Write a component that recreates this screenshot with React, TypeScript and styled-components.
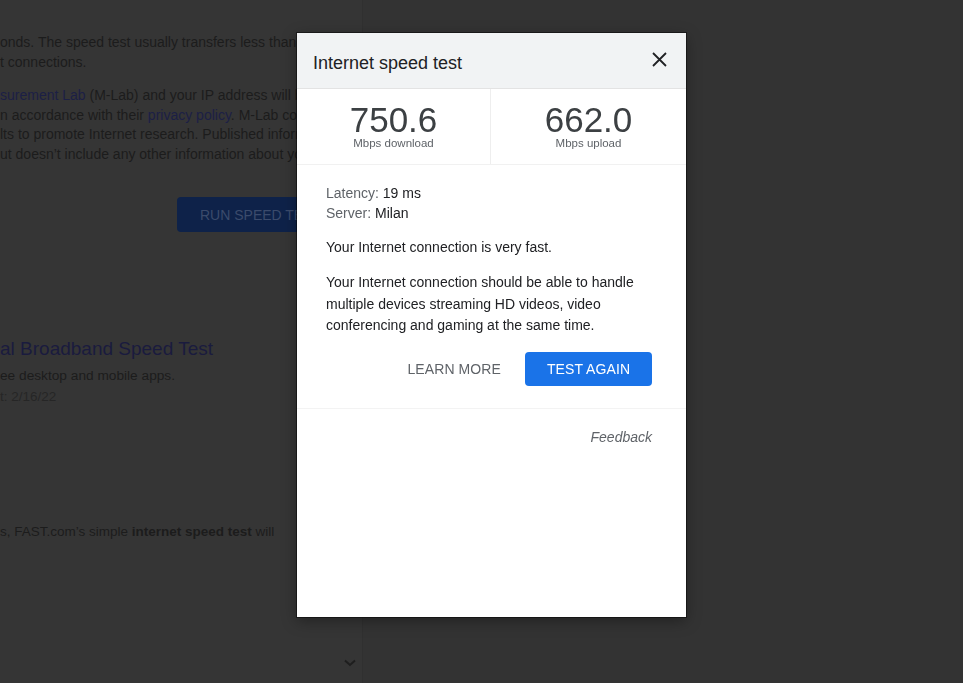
import React from "react";
import styled, { createGlobalStyle } from "styled-components";

const Global = createGlobalStyle`
  html, body { margin: 0; padding: 0; }
  body {
    background: #333333;
    font-family: "Liberation Sans", Arial, sans-serif;
    overflow: hidden;
  }
  * { box-sizing: border-box; }
`;

const Page = styled.div`
  width: 963px;
  height: 683px;
  display: flex;
  background: #333333;
`;

const LeftPane = styled.div`
  width: 363px;
  height: 683px;
  background: #353535;
  border-right: 1px solid #303030;
  padding-top: 33px;
  display: flex;
  flex-direction: column;
  overflow: hidden;
  white-space: nowrap;
`;

const Para = styled.p<{ $mt?: number }>`
  margin: ${(p) => p.$mt ?? 0}px 0 0;
  font-size: 14px;
  line-height: 19.5px;
  color: #1c1c1c;
`;

const DimLink = styled.span`
  color: #1c1f45;
`;

const RunButton = styled.div`
  margin: 33px 0 0 177px;
  width: 170px;
  height: 35px;
  border-radius: 4px;
  background: #0e2249;
  color: #3b4b6c;
  font-size: 14px;
  display: flex;
  align-items: center;
  padding-left: 23px;
`;

const Heading = styled.div`
  margin-top: 105px;
  font-size: 19px;
  line-height: 24px;
  color: #1a1b3e;
`;

const Sub = styled.div<{ $mt: number; $c?: string; $fs?: number }>`
  margin-top: ${(p) => p.$mt}px;
  font-size: ${(p) => p.$fs ?? 14}px;
  line-height: 19px;
  color: ${(p) => p.$c ?? "#1c1c1c"};
`;

const Chevron = styled.div`
  margin: 117px 0 0 343px;
  width: 14px;
  height: 10px;
  display: flex;
`;

const Modal = styled.div`
  position: fixed;
  left: 297px;
  top: 33px;
  width: 389px;
  height: 584px;
  background: #ffffff;
  box-shadow: 0 0 0 1px rgba(0, 0, 0, 0.45), 0 4px 14px rgba(0, 0, 0, 0.35);
  display: flex;
  flex-direction: column;
`;

const Header = styled.div`
  height: 56px;
  background: #f1f3f4;
  border-bottom: 1px solid #e3e3e3;
  display: flex;
  align-items: center;
  justify-content: space-between;
  padding: 0 15px 0 16px;
`;

const Title = styled.div`
  font-size: 18px;
  color: #202124;
  margin-top: 6px;
`;

const CloseBtn = styled.div`
  width: 24px;
  height: 24px;
  display: flex;
  align-items: center;
  justify-content: center;
  margin-top: -3px;
`;

const Stats = styled.div`
  display: grid;
  grid-template-columns: 194px 1fr;
  border-bottom: 1px solid #f1f1f1;
`;

const Stat = styled.div<{ $divider?: boolean }>`
  height: 75px;
  display: flex;
  flex-direction: column;
  align-items: center;
  padding-top: 14px;
  border-right: ${(p) => (p.$divider ? "1px solid #eeeeee" : "none")};
`;

const Value = styled.div`
  font-size: 35px;
  line-height: 33px;
  color: #3c4043;
`;

const Unit = styled.div`
  font-size: 11.5px;
  line-height: 14px;
  color: #5f6368;
`;

const Body = styled.div`
  padding: 18px 34px 0 29px;
  display: flex;
  flex-direction: column;
`;

const Line = styled.div<{ $mt?: number; $lh?: number }>`
  margin-top: ${(p) => p.$mt ?? 0}px;
  font-size: 14px;
  line-height: ${(p) => p.$lh ?? 21}px;
  color: #202124;
`;

const Label = styled.span`
  color: #5f6368;
`;

const Actions = styled.div`
  margin-top: 15px;
  display: flex;
  justify-content: flex-end;
  align-items: center;
  gap: 14px;
  padding-bottom: 22px;
`;

const TextButton = styled.div`
  height: 34px;
  padding: 0 10px;
  display: flex;
  align-items: center;
  font-size: 14px;
  color: #5f6368;
  letter-spacing: 0.1px;
`;

const PrimaryButton = styled.div`
  width: 127px;
  height: 34px;
  border-radius: 4px;
  background: #1a73e8;
  color: #ffffff;
  font-size: 14px;
  display: flex;
  align-items: center;
  justify-content: center;
  letter-spacing: 0.1px;
`;

const Footer = styled.div`
  border-top: 1px solid #f3f3f3;
  padding: 18px 34px 0 29px;
  display: flex;
  justify-content: flex-end;
`;

const Feedback = styled.div`
  font-size: 14px;
  line-height: 20px;
  font-style: italic;
  color: #5f6368;
`;

export default function App() {
  return (
    <>
      <Global />
      <Page>
        <LeftPane>
          <Para>onds. The speed test usually transfers less than 40 MB of data, but may transfer more data on</Para>
          <Para>t connections.</Para>
          <Para $mt={14}>
            <DimLink>surement Lab</DimLink> (M-Lab) and your IP address will be shared with them and processed by them
          </Para>
          <Para>
            n accordance with their <DimLink>privacy policy</DimLink>. M-Lab conducts the test and publicly publishes all test
          </Para>
          <Para>lts to promote Internet research. Published information includes your IP address and test results,</Para>
          <Para>ut doesn’t include any other information about you as a Google user.</Para>
          <RunButton>RUN SPEED TEST</RunButton>
          <Heading>al Broadband Speed Test</Heading>
          <Sub $mt={5} $fs={13.7}>ee desktop and mobile apps.</Sub>
          <Sub $mt={2} $c="#262626" $fs={13.5}>t: 2/16/22</Sub>
          <Sub $mt={116} $fs={13.5}>
            s, FAST.com’s simple <b>internet speed test</b> will
          </Sub>
          <Chevron>
            <svg width="14" height="10" viewBox="0 0 14 10">
              <path d="M2 2.5 L7 7 L12 2.5" fill="none" stroke="#1e1e1e" strokeWidth="2" />
            </svg>
          </Chevron>
        </LeftPane>
      </Page>
      <Modal>
        <Header>
          <Title>Internet speed test</Title>
          <CloseBtn>
            <svg width="15" height="15" viewBox="0 0 15 15">
              <path d="M1 1 L14 14 M14 1 L1 14" stroke="#202124" strokeWidth="1.8" fill="none" />
            </svg>
          </CloseBtn>
        </Header>
        <Stats>
          <Stat $divider>
            <Value>750.6</Value>
            <Unit>Mbps download</Unit>
          </Stat>
          <Stat>
            <Value>662.0</Value>
            <Unit>Mbps upload</Unit>
          </Stat>
        </Stats>
        <Body>
          <Line $lh={20}>
            <Label>Latency:</Label> 19 ms
          </Line>
          <Line $lh={20}>
            <Label>Server:</Label> Milan
          </Line>
          <Line $mt={14}>Your Internet connection is very fast.</Line>
          <Line $mt={14} $lh={21.5}>
            Your Internet connection should be able to handle multiple devices streaming HD videos, video
            conferencing and gaming at the same time.
          </Line>
          <Actions>
            <TextButton>LEARN MORE</TextButton>
            <PrimaryButton>TEST AGAIN</PrimaryButton>
          </Actions>
        </Body>
        <Footer>
          <Feedback>Feedback</Feedback>
        </Footer>
      </Modal>
    </>
  );
}
